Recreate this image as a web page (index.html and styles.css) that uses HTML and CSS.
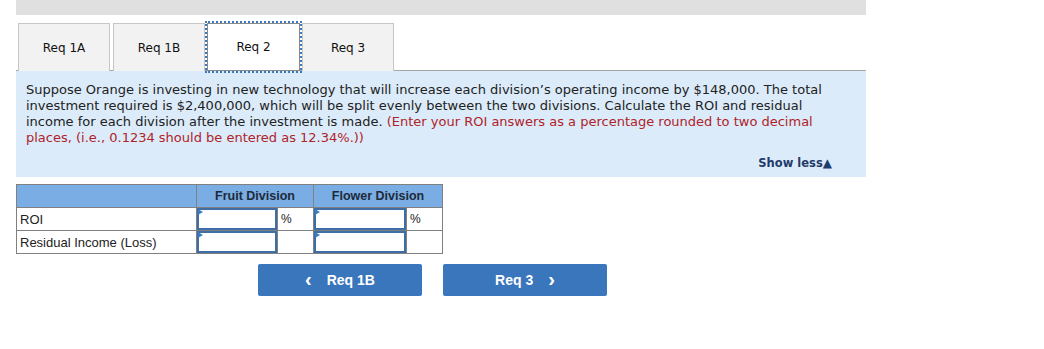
FILE: index.html
```html
<!doctype html>
<html lang="en">
  <head>
    <meta charset="UTF-8" />
    <meta name="viewport" content="width=device-width, initial-scale=1.0" />
    <title>Req 2</title>
    <link rel="stylesheet" href="styles.css">
  </head>
  <body>
    <div class="page">
      <div class="topbar"></div>

      <div class="tabs">
        <button class="tab" type="button">Req 1A</button>
        <button class="tab" type="button">Req 1B</button>
        <button class="tab active" type="button">Req 2</button>
        <button class="tab" type="button">Req 3</button>
      </div>

      <div class="prompt">
        <p>
          Suppose Orange is investing in new technology that will increase each division’s operating income by $148,000. The total
          investment required is $2,400,000, which will be split evenly between the two divisions. Calculate the ROI and residual
          income for each division after the investment is made.
          <span class="hint">(Enter your ROI answers as a percentage rounded to two decimal places, (i.e., 0.1234 should be entered as 12.34%.))</span>
        </p>
        <div class="show-less">Show less<span class="arrow">▲</span></div>
      </div>

      <table class="answers">
        <thead>
          <tr>
            <th class="label-col"></th>
            <th colspan="2">Fruit Division</th>
            <th colspan="2">Flower Division</th>
          </tr>
        </thead>
        <tbody>
          <tr>
            <td class="label">ROI</td>
            <td class="entry entry-fruit"><input type="text" /></td>
            <td class="unit">%</td>
            <td class="entry entry-flower"><input type="text" /></td>
            <td class="unit">%</td>
          </tr>
          <tr>
            <td class="label">Residual Income (Loss)</td>
            <td class="entry entry-fruit"><input type="text" /></td>
            <td class="unit"></td>
            <td class="entry entry-flower"><input type="text" /></td>
            <td class="unit"></td>
          </tr>
        </tbody>
      </table>

      <div class="nav">
        <button class="nav-btn" type="button"><span class="chev">‹</span>Req 1B</button>
        <button class="nav-btn" type="button">Req 3<span class="chev">›</span></button>
      </div>
    </div>
  </body>
</html>
```

FILE: styles.css
```css
* {
  box-sizing: border-box;
}

body {
  margin: 0;
  background: #fff;
  color: #222;
  font: 13px "DejaVu Sans", Verdana, sans-serif;
}

.page {
  width: 850px;
  margin-left: 16px;
}

.topbar {
  height: 15px;
  background-color: #e0e0e0;
}

.tabs {
  display: flex;
  height: 56px;
  padding-top: 8px;
  padding-left: 2px;
  border-bottom: 1px solid #a6a6a6;
}

.tab {
  width: 92px;
  height: 48px;
  margin-right: 3px;
  border: 1px solid #c6c6c6;
  border-bottom: none;
  background-color: #f2f2f2;
  color: #111;
  font: 12px "DejaVu Sans", Verdana, sans-serif;
  cursor: pointer;

  &.active {
    width: 93px;
    height: 48px;
    margin-left: -1px;
    margin-right: 2px;
    border: 1px solid #8a8a8a;
    background-color: #fff;
    outline: 2px dotted #3c78c0;
    outline-offset: 0;
    position: relative;
    z-index: 1;
  }
}

.prompt {
  padding: 11px 10px 7px;
  background-color: #dbebf9;

  p {
    margin: 0;
    padding-right: 30px;
    line-height: 16px;
    color: #222;
  }
}

.hint {
  color: #b0232a;
}

.show-less {
  margin-top: 10px;
  padding-right: 24px;
  text-align: right;
  color: #1f3b6b;
  font: bold 11.5px "DejaVu Sans", Verdana, sans-serif;
}

.arrow {
  font-size: 12px;
}

.answers {
  margin-top: 7px;
  border-collapse: collapse;
  font: 12px "Liberation Sans", Arial, sans-serif;
  color: #222;

  th,
  td {
    height: 23px;
    padding: 0;
    border: 1px solid #808080;
  }

  th {
    background-color: #79ade3;
    color: #1e2a3a;
    font-weight: bold;
    font-size: 12.5px;
  }
}

.label-col {
  width: 180px;
}

.label {
  padding-left: 3px !important;
  font-size: 13px;
}

.entry {
  position: relative;

  input {
    display: block;
    width: 100%;
    height: 22px;
    margin: 0;
    border: 2px solid #3d6ea5;
    background: #fff;
  }

  &::before {
    position: absolute;
    top: 1px;
    left: 1px;
    border-top: 3px solid transparent;
    border-bottom: 3px solid transparent;
    border-left: 5px solid #3d7cc4;
    content: '';
  }
}

.entry-fruit {
  width: 81px;
}

.entry-flower {
  width: 93px;
}

.unit {
  width: 36px;
  padding-left: 3px !important;
  vertical-align: middle;
}

.nav {
  display: flex;
  gap: 21px;
  margin-top: 10px;
  padding-left: 242px;
}

.nav-btn {
  display: flex;
  align-items: center;
  justify-content: center;
  gap: 15px;
  width: 164px;
  height: 32px;
  border: none;
  border-radius: 2px;
  background-color: #3a76bc;
  color: #fff;
  font: bold 14px "Liberation Sans", Arial, sans-serif;
  cursor: pointer;
}

.chev {
  font-size: 20px;
  line-height: 1;
  margin-top: -3px;
}
```
